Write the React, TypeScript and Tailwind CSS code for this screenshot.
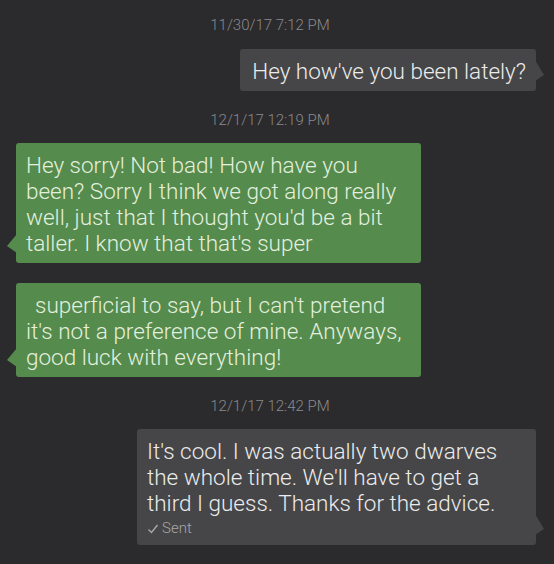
import React from "react";

const font = { fontFamily: "Roboto, 'Noto Sans', sans-serif" };

function Stamp({ children }: { children: React.ReactNode }) {
  return (
    <div className="flex justify-center pr-[14px] text-[15px] leading-[20px] font-light text-[#8a8a8c]">
      {children}
    </div>
  );
}

function LeftTail() {
  return (
    <svg className="absolute left-[-9px] bottom-[10px]" width="10" height="19" viewBox="0 0 10 19">
      <polygon points="10,0 0,12 10,19" fill="#558b4d" />
    </svg>
  );
}

function RightTail() {
  return (
    <svg className="absolute right-[-9px] bottom-[10px]" width="10" height="21" viewBox="0 0 10 21">
      <polygon points="0,0 9,15 0,21" fill="#464648" />
    </svg>
  );
}

export default function App() {
  return (
    <div
      className="w-[554px] h-[564px] overflow-hidden bg-[#2b2b2d] pt-[15px] flex flex-col"
      style={font}
    >
      <Stamp>11/30/17 7:12 PM</Stamp>

      <div className="flex justify-end pr-[18px] mt-[14px]">
        <div className="relative bg-[#464648] rounded-[3px] pl-[12px] pr-[10px] pt-[9px] pb-[7px] text-[22.5px] leading-[26px] font-light text-[#ececec] whitespace-nowrap">
          Hey how've you been lately?
          <RightTail />
        </div>
      </div>

      <div className="mt-[19px]">
        <Stamp>12/1/17 12:19 PM</Stamp>
      </div>

      <div className="flex pl-[16px] mt-[13px]">
        <div className="relative w-[405px] bg-[#558b4d] rounded-[3px] pl-[10px] pr-[8px] pt-[9px] pb-[7px] text-[22.5px] leading-[26px] font-light text-[#e4f0df] whitespace-nowrap">
          <div>Hey sorry! Not bad! How have you</div>
          <div>been? Sorry I think we got along really</div>
          <div>well, just that I thought you'd be a bit</div>
          <div>taller. I know that that's super</div>
          <LeftTail />
        </div>
      </div>

      <div className="flex pl-[16px] mt-[20px]">
        <div className="relative w-[405px] bg-[#558b4d] rounded-[3px] pl-[10px] pr-[8px] pt-[9px] pb-[7px] text-[22.5px] leading-[26px] font-light text-[#e4f0df] whitespace-nowrap">
          <div className="pl-[9px]">superficial to say, but I can't pretend</div>
          <div>it's not a preference of mine. Anyways,</div>
          <div>good luck with everything!</div>
          <LeftTail />
        </div>
      </div>

      <div className="mt-[19px]">
        <Stamp>12/1/17 12:42 PM</Stamp>
      </div>

      <div className="flex justify-end pr-[18px] mt-[13px]">
        <div className="relative w-[399px] bg-[#464648] rounded-[3px] pl-[10px] pr-[8px] pt-[9px] pb-[6px] text-[22.5px] leading-[26px] font-light text-[#ececec] whitespace-nowrap">
          <div>It's cool. I was actually two dwarves</div>
          <div>the whole time. We'll have to get a</div>
          <div>third I guess. Thanks for the advice.</div>
          <div className="flex items-center gap-[3px] text-[15px] leading-[22px] text-[#a8a8aa] mt-[1px]">
            <svg width="12" height="12" viewBox="0 0 12 12" className="mt-[1px]">
              <path d="M1.5 6.5 L4.5 9.5 L10.5 2" fill="none" stroke="#a8a8aa" strokeWidth="1.4" />
            </svg>
            <span>Sent</span>
          </div>
          <RightTail />
        </div>
      </div>
    </div>
  );
}
